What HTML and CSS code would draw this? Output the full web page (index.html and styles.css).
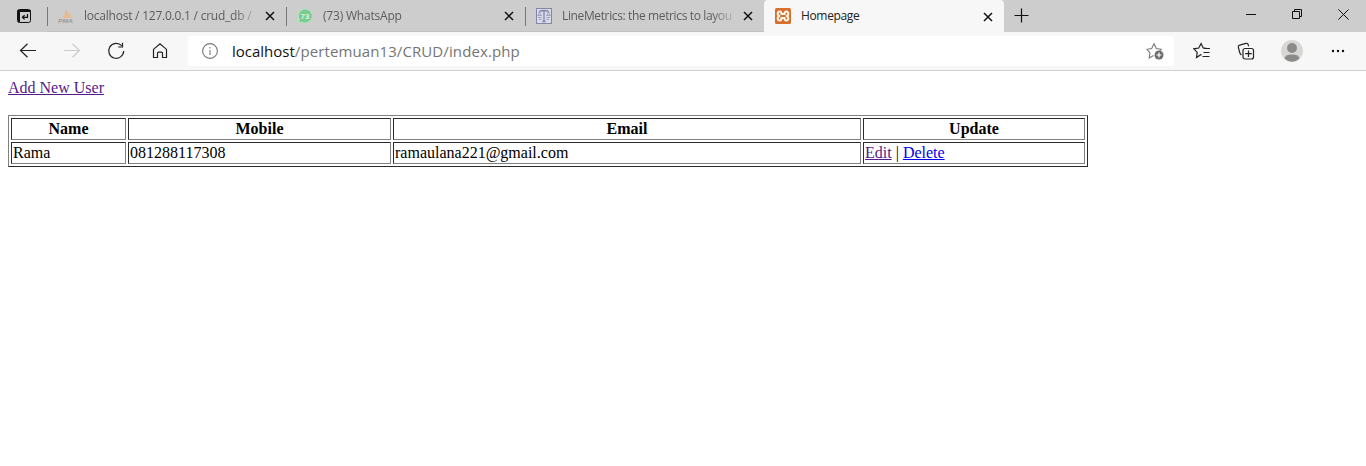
FILE: index.html
```
<!DOCTYPE html>
<html lang="en">
<head>
<meta charset="utf-8">
<title>Homepage</title>
<link rel="stylesheet" href="styles.css">
</head>
<body>
<div class="tabstrip">
  <div class="tab-actions">
    <svg width="16" height="16" viewBox="0 0 16 16" fill="none" stroke="#111"><rect x="1.500" y="1.500" width="13" height="13" rx="2"/><path d="M1.500 3h13M3 2v12" stroke-width="2"/><path d="M11.500 6v3.300H6.500M8.600 7.200L6.400 9.300l2.200 2.100" stroke-width="1.200"/></svg>
  </div>
  <div class="tab">
    <svg class="favicon" width="16" height="16" viewBox="0 0 16 16"><path d="M5 10q2-3 3-8q3 3 3 8z" fill="#e6b88c"/><path d="M10.700 4q3 3 4 6h-4z" fill="#e5bf9a"/><path d="M2 10q3-1 4-4v4z" fill="#dfc6ac"/><text x="0" y="15" class="pma" textLength="15" lengthAdjust="spacingAndGlyphs">PMA</text></svg>
    <span class="title faded t-db">localhost / 127.0.0.1 / crud_db /</span>
    <svg class="close" width="10" height="10" viewBox="0 0 10 10"><path d="M1 1l8 8M9 1L1 9"/></svg>
  </div>
  <div class="tab">
    <svg class="favicon" width="16" height="16" viewBox="0 0 16 16"><path d="M8 .4a7.500 7.500 0 1 1-3.500 14.300L.7 15.600l.9-3.800A7.500 7.500 0 0 1 8 .4z" fill="#b7e2c3"/><path d="M8 1.500a6.500 6.500 0 1 1-3.200 12l-2.500.8.7-2.600A6.500 6.500 0 0 1 8 1.500z" fill="#78cb91"/><text x="8" y="10.800" class="count" text-anchor="middle">73</text></svg>
    <span class="title faded t-wa">(73) WhatsApp</span>
    <svg class="close" width="10" height="10" viewBox="0 0 10 10"><path d="M1 1l8 8M9 1L1 9"/></svg>
  </div>
  <div class="tab">
    <svg class="favicon" width="16" height="16" viewBox="0 0 16 16" fill="none" stroke="#8584a9"><rect x=".5" y=".5" width="15" height="15" fill="#dadae9"/><path d="M3 3.500q5-2 10 0M8 2.500v11M6.400 13.500h3.200" stroke-width="1.300"/><path d="M3.500 4L1.800 7.500h3.600zM12.500 4l-1.800 3.500h3.600zM2 9.500h3.500M10.500 9.500H14M3 11.500h2.500M10.500 11.500H13" stroke-width=".7"/></svg>
    <span class="title faded t-line">LineMetrics: the metrics to layou</span>
    <svg class="close" width="10" height="10" viewBox="0 0 10 10"><path d="M1 1l8 8M9 1L1 9"/></svg>
  </div>
  <div class="tab active">
    <svg class="favicon" width="16" height="16" viewBox="0 0 16 16"><rect width="16" height="16" rx="1.500" fill="#d86f2c"/><path d="M5.200 8C1.900 8 2 3.400 4.700 3.400c1.800 0 1.800 1.300 1.800 2.600h3c0-1.300 0-2.600 1.800-2.600C14 3.400 14.100 8 10.800 8c3.300 0 3.200 4.600.5 4.600-1.800 0-1.800-1.300-1.800-2.600h-3c0 1.300 0 2.600-1.800 2.600C2 12.600 1.900 8 5.200 8z" fill="none" stroke="#fff6ea" stroke-width="2"/></svg>
    <span class="title t-home">Homepage</span>
    <svg class="close" width="10" height="10" viewBox="0 0 10 10"><path d="M1 1l8 8M9 1L1 9"/></svg>
  </div>
  <svg class="new-tab" width="15" height="15" viewBox="0 0 15 15"><path d="M7.500 .5v14M.5 7.500h14" stroke="#111" stroke-width="1.200"/></svg>
  <div class="window-controls">
    <div class="control"><svg width="10" height="10" viewBox="0 0 10 10"><path d="M0 5.500h10"/></svg></div>
    <div class="control"><svg width="10" height="10" viewBox="0 0 10 10"><path d="M.5 2.500h7v7h-7zM2.500 2.500v-2h7v7h-2"/></svg></div>
    <div class="control"><svg width="11" height="11" viewBox="0 0 11 11"><path d="M.4 .4l10.200 10.200M10.600 .4L.4 10.600"/></svg></div>
  </div>
</div>

<div class="toolbar">
  <div class="tool"><svg width="18" height="16" viewBox="0 0 18 16"><path d="M17 7.500H1.500M8.500 .8L1.500 7.500l7 6.700"/></svg></div>
  <div class="tool disabled"><svg width="18" height="16" viewBox="0 0 18 16"><path d="M1 7.500h15.500M9.500 .8l7 6.700-7 6.700"/></svg></div>
  <div class="tool"><svg width="18" height="18" viewBox="0 0 18 18"><path d="M14.700 3.700A7.500 7.500 0 1 0 16.700 9M15.500 .8v4.200h-4.300"/></svg></div>
  <div class="tool"><svg width="16" height="18" viewBox="0 0 16 18"><path d="M1.500 7.400L8 1.700l6.500 5.700v8.100h-4V11.200a1 1 0 0 0-1-1h-3a1 1 0 0 0-1 1v4.300h-4z"/></svg></div>
  <div class="address">
    <svg class="info" width="16" height="16" viewBox="0 0 16 16"><circle cx="8" cy="8" r="7.400"/><path d="M8 7v5M8 4v1.500"/></svg>
    <span class="url"><span class="host">localhost</span><span class="path">/pertemuan13/CRUD/index.php</span></span>
    <svg class="star" width="18" height="18" viewBox="0 0 18 18"><path d="M7.500 13.600l-4.300 2.300.8-4.900L.9 7.300l4.800-.8L8 1.800l2.300 4.700 4.900.8-1.400 1.400"/><circle cx="13" cy="13" r="4.500" class="badge"/><path d="M13 10.500v5M10.500 13h5" class="plus"/></svg>
  </div>
  <div class="tool"><svg width="18" height="18" viewBox="0 0 18 18"><path d="M8.500 12.900L7.800 12.700l-4.300 2.900.7-5.200L.9 6.800l4.800-.8L8.100 1.600l2 4.200 3.800.7M10.500 6.500h6.500M10.500 10.500h6M9.500 14.500h7"/></svg></div>
  <div class="tool"><svg width="18" height="18" viewBox="0 0 18 18"><path d="M4.500 12.900C3.500 12.500 3 11.600 2.700 10.500L1.400 5.300a1.700 1.700 0 0 1 1.200-2.200L9 1.300a1.700 1.700 0 0 1 2.100 1.200l.6 1.700"/><rect x="6" y="6.500" width="10.500" height="10.500" rx="2"/><path d="M11.500 8.500v6.500M8.200 11.700h6.600"/></svg></div>
  <div class="profile"><svg width="22" height="22" viewBox="0 0 22 22"><circle cx="11" cy="11" r="11" fill="#d8d7d5"/><circle cx="11" cy="8" r="5" fill="#8c8a87"/><path d="M3.600 18.800q0-4.300 7.400-4.300t7.400 4.300A11 11 0 0 1 3.600 18.800z" fill="#8c8a87"/></svg></div>
  <div class="tool"><svg class="dots" width="14" height="4" viewBox="0 0 14 4"><circle cx="2" cy="2" r="1.200"/><circle cx="7" cy="2" r="1.200"/><circle cx="12" cy="2" r="1.200"/></svg></div>
</div>

<main class="page">
  <a class="visited" href="#add">Add New User</a><br><br>
  <table class="users">
    <tr><th class="name">Name</th><th class="mobile">Mobile</th><th class="email">Email</th><th class="update">Update</th></tr>
    <tr><td>Rama</td><td>081288117308</td><td>ramaulana221@gmail.com</td><td><a class="visited" href="#edit">Edit</a> | <a class="link" href="#delete">Delete</a></td></tr>
  </table>
</main>
</body>
</html>
```
FILE: styles.css
```
* { box-sizing: border-box; }
body { margin: 0; background: #fff; overflow: hidden; }
svg { display: block; flex: none; }

.tabstrip {
  display: flex;
  height: 32px;
  background: #cdcdcd;
  font: 12px/16px "Open Sans", "Noto Sans", sans-serif;
  color: #5c5c5c;
}
.tab-actions { width: 47px; display: flex; align-items: center; padding-left: 16px; }
.tab {
  position: relative;
  width: 239px;
  height: 32px;
  display: flex;
  align-items: center;
  padding: 0 11px;
  border-bottom: 1px solid #c2c2c2;
}
.tab::before { content: ""; position: absolute; left: 0; top: 7px; width: 1px; height: 19px; background: #777; }
.tab.active { width: 240px; background: #f7f7f7; color: #222; border: 0; border-radius: 4px 4px 0 0; }
.tab.active::before { display: none; }
.favicon { width: 16px; }
.title { width: 173px; margin-left: 10px; white-space: nowrap; }
.faded { -webkit-mask-image: linear-gradient(90deg, #000 150px, transparent 176px); mask-image: linear-gradient(90deg, #000 150px, transparent 176px); }
.t-db { letter-spacing: -0.23px; }
.t-wa { letter-spacing: -0.2px; }
.t-line { letter-spacing: -0.37px; }
.t-home { letter-spacing: -0.35px; }
.close { margin: 1px 0 0 8.5px; fill: none; stroke: #111; stroke-width: 1.5; }
.pma { font: italic bold 6px "Liberation Sans", sans-serif; fill: #9b9ba2; }
.count { font: bold 8px "Liberation Sans", sans-serif; fill: #d9f4e0; }
.new-tab { margin: 8px 0 0 10px; }
.window-controls { display: flex; margin-left: auto; }
.control { width: 46px; height: 28px; display: flex; align-items: center; justify-content: center; }
.control svg { fill: none; stroke: #111; stroke-width: 1; }

.toolbar {
  height: 39px;
  display: flex;
  align-items: center;
  padding: 0 6px;
  background: #f7f7f7;
  border-bottom: 1px solid #cfcfcf;
}
.tool { width: 44px; display: flex; justify-content: center; }
.tool svg { fill: none; stroke: #222; stroke-width: 1.2; }
.tool.disabled svg { stroke: #ccc; }
.tool svg.dots { fill: #111; stroke: none; }
.profile { width: 48px; display: flex; justify-content: center; }
.address {
  flex: 1;
  height: 30px;
  margin: 0 6px;
  padding: 0 10px 0 14px;
  display: flex;
  align-items: center;
  background: #fff;
  border-radius: 3px;
}
.info { fill: none; stroke: #777; stroke-width: 1.1; }
.url { flex: 1; margin-left: 14px; font: 15px/20px "Open Sans", "Noto Sans", sans-serif; color: #757575; }
.host { color: #111; letter-spacing: 0; }
.path { letter-spacing: 0.1px; }
.star { fill: none; stroke: #777; stroke-width: 1.1; }
.star .badge { fill: #6b6b6b; stroke: none; }
.star .plus { stroke: #fff; stroke-width: 1.2; }

.page { padding: 8px; font: 16px/18px "Liberation Serif", "Times New Roman", serif; color: #000; }
.visited { color: #551a8b; }
.link { color: #0000ee; }
.users {
  width: 1080px;
  table-layout: fixed;
  border-collapse: separate;
  border-spacing: 2px;
  border: 1px solid;
  border-color: #808080 #2b2b2b #2b2b2b #808080;
}
.users th, .users td {
  height: 22px;
  padding: 1px;
  border: 1px solid;
  border-color: #2b2b2b #808080 #808080 #2b2b2b;
}
.name { width: 115px; }
.mobile { width: 263px; }
.email { width: 468px; }
.update { width: 222px; }
```
